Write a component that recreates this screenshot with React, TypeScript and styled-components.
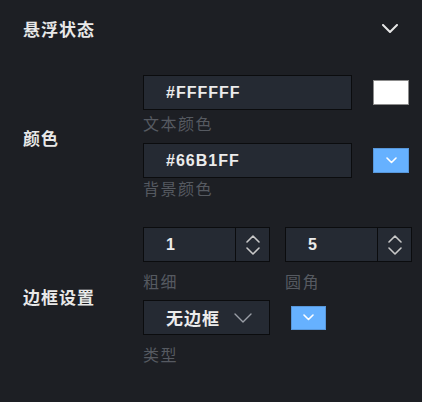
import styled, { createGlobalStyle } from 'styled-components'

const GlobalStyle = createGlobalStyle`
  html, body {
    margin: 0;
    padding: 0;
    background: #1d1f24;
  }
  body {
    font-family: "Liberation Sans", "Noto Sans CJK SC", sans-serif;
    color: #e6e6e6;
  }
`

function Chevron({ size = 15, color = '#e6e6e6', width = 2, up = false }: { size?: number; color?: string; width?: number; up?: boolean }) {
  const h = size / 2
  return (
    <svg width={size + 2} height={h + 2} viewBox={`-1 -1 ${size + 2} ${h + 2}`} fill="none">
      <polyline
        points={up ? `0,${h} ${size / 2},0 ${size},${h}` : `0,0 ${size / 2},${h} ${size},0`}
        stroke={color}
        strokeWidth={width}
        strokeLinecap="round"
        strokeLinejoin="round"
      />
    </svg>
  )
}

function App() {
  return (
    <Panel>
      <GlobalStyle />
      <Header>
        <Title>悬浮状态</Title>
        <Chevron size={14} />
      </Header>

      <Body>
        <Row>
          <RowLabel>颜色</RowLabel>
          <Fields>
            <FieldLine>
              <TextInput>#FFFFFF</TextInput>
              <Swatch color="#ffffff" border="#8c8c8c" />
            </FieldLine>
            <Hint top={5}>文本颜色</Hint>
            <FieldLine top={8}>
              <TextInput>#66B1FF</TextInput>
              <Swatch color="#66b1ff" border="#5897da">
                <Chevron size={9} width={1.6} color="#ffffff" />
              </Swatch>
            </FieldLine>
            <Hint top={2}>背景颜色</Hint>
          </Fields>
        </Row>

        <Row>
          <RowLabel>边框设置</RowLabel>
          <Fields>
            <Pair>
              <Column>
                <NumberBox>
                  <NumberValue>1</NumberValue>
                  <Spinner>
                    <Chevron size={12} width={1.6} color="#c8c8c8" up />
                    <Chevron size={12} width={1.6} color="#c8c8c8" />
                  </Spinner>
                </NumberBox>
                <Hint top={11}>粗细</Hint>
              </Column>
              <Column>
                <NumberBox>
                  <NumberValue>5</NumberValue>
                  <Spinner>
                    <Chevron size={12} width={1.6} color="#c8c8c8" up />
                    <Chevron size={12} width={1.6} color="#c8c8c8" />
                  </Spinner>
                </NumberBox>
                <Hint top={11}>圆角</Hint>
              </Column>
            </Pair>
            <FieldLine top={7}>
              <Select>
                <SelectText>无边框</SelectText>
                <Chevron size={16} width={1.4} color="#9a9ea6" />
              </Select>
              <Swatch color="#66b1ff" border="#5897da" small>
                <Chevron size={9} width={1.6} color="#ffffff" />
              </Swatch>
            </FieldLine>
            <Hint top={11}>类型</Hint>
          </Fields>
        </Row>
      </Body>
    </Panel>
  )
}

const Panel = styled.div`
  width: 422px;
  height: 402px;
  background: #1d1f24;
  box-sizing: border-box;
`

const Header = styled.div`
  height: 56px;
  padding: 0 24px 0 23px;
  display: flex;
  align-items: center;
  justify-content: space-between;
`

const Title = styled.div`
  font-size: 17px;
  font-weight: 700;
  letter-spacing: 1px;
  color: #e8e8e8;
`

const Body = styled.div`
  padding: 19px 11px 0 23px;
  display: flex;
  flex-direction: column;
  gap: 27px;
`

const Row = styled.div`
  display: grid;
  grid-template-columns: 120px 1fr;
  align-items: center;
`

const RowLabel = styled.div`
  font-size: 17px;
  font-weight: 700;
  letter-spacing: 1px;
  color: #e8e8e8;
`

const Fields = styled.div`
  display: flex;
  flex-direction: column;
`

const FieldLine = styled.div<{ top?: number }>`
  display: flex;
  align-items: center;
  gap: 21px;
  margin-top: ${p => p.top ?? 0}px;
`

const Box = styled.div`
  box-sizing: border-box;
  height: 35px;
  background: #252a33;
  border: 1px solid #0b0c0e;
  display: flex;
  align-items: center;
`

const TextInput = styled(Box)`
  width: 209px;
  padding-left: 22px;
  font-size: 16px;
  font-weight: 700;
  letter-spacing: 1px;
  color: #ececec;
`

const Swatch = styled.div<{ color: string; border: string; small?: boolean }>`
  box-sizing: border-box;
  width: ${p => (p.small ? 35 : 36)}px;
  height: ${p => (p.small ? 24 : 25)}px;
  background: ${p => p.color};
  border: 1px solid ${p => p.border};
  display: flex;
  align-items: center;
  justify-content: center;
`

const Hint = styled.div<{ top?: number }>`
  margin-top: ${p => p.top ?? 0}px;
  font-size: 16px;
  line-height: 20px;
  letter-spacing: 1.5px;
  color: #565a61;
`

const Pair = styled.div`
  display: flex;
  gap: 15px;
`

const Column = styled.div`
  display: flex;
  flex-direction: column;
`

const NumberBox = styled(Box)`
  width: 127px;
  justify-content: space-between;
`

const NumberValue = styled.div`
  padding-left: 22px;
  font-size: 16px;
  font-weight: 700;
  color: #ececec;
`

const Spinner = styled.div`
  box-sizing: border-box;
  width: 34px;
  height: 100%;
  border-left: 1px solid #0b0c0e;
  display: flex;
  flex-direction: column;
  align-items: center;
  justify-content: center;
  gap: 4px;
`

const Select = styled(Box)`
  width: 127px;
  padding-left: 22px;
  gap: 14px;
`

const SelectText = styled.div`
  font-size: 17px;
  font-weight: 700;
  letter-spacing: 1px;
  color: #ececec;
`

export default App
